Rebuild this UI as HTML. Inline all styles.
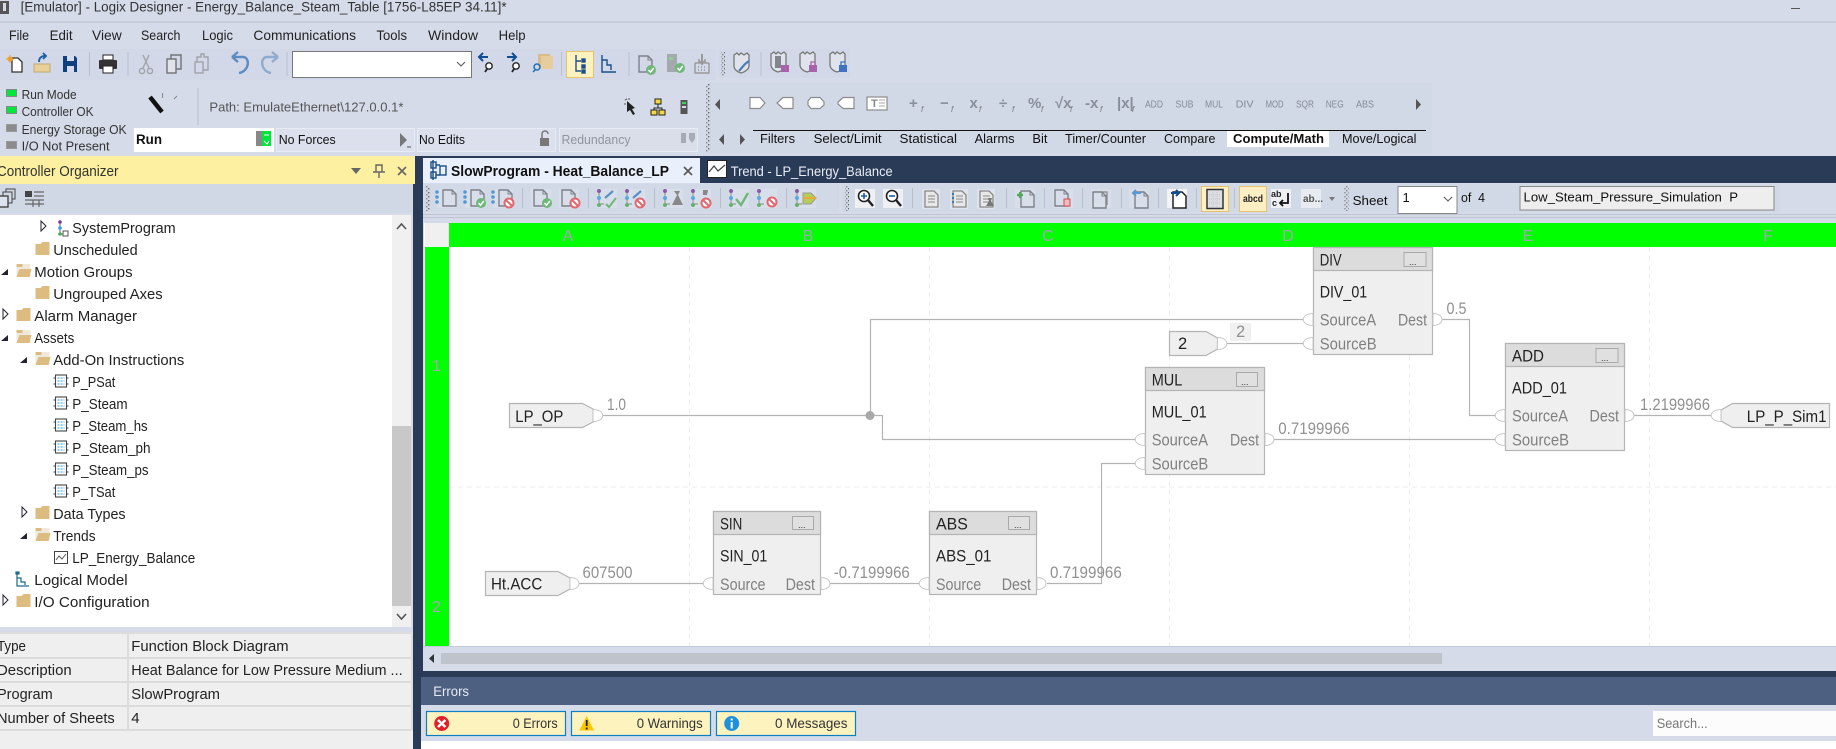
<!DOCTYPE html>
<html lang="en"><head><meta charset="utf-8"><title>Logix Designer</title>
<style>
html,body{margin:0;padding:0;background:#d5dbe9;overflow:hidden}
svg{display:block}
text{font-family:"Liberation Sans",sans-serif;white-space:pre}
.m{font-size:14px;fill:#222}
.t{font-size:15px;fill:#222}
.s{font-size:12.5px;fill:#333}
.i{font-size:13px;fill:#111}
.h{font-size:16px;fill:#ab9fba;text-anchor:middle}
.n{font-size:16.5px;fill:#222}
.p{font-size:16.5px;fill:#808080}
.v{font-size:16.5px;fill:#909090}
.o{font-size:10.5px;fill:#858b96}
.f{font-size:15px;fill:#8a8f9a;font-weight:bold}
.w{fill:none;stroke:#b4b4b4;stroke-width:1.2}
.b{stroke:#b4b4b4;stroke-width:1.2}
.pin{fill:#fff;stroke:#c8c8c8;stroke-width:1}
.g{stroke:#eeeeee;stroke-width:1;stroke-dasharray:5 4}
.sep{stroke:#b9bfcc;stroke-width:1}
</style></head>
<body>
<svg xmlns="http://www.w3.org/2000/svg" width="1836" height="749" viewBox="0 0 1836 749">
<defs>
<g id="doc"><path d="M-6-8H3L7-4V8H-6Z" fill="none" stroke="#7d818a" stroke-width="1.4"/><path d="M3-8V-4H7" fill="none" stroke="#7d818a"/></g>
<g id="docb"><path d="M-6-8H3L7-4V8H-6Z" fill="#fff" stroke="#222" stroke-width="1.5"/></g>
<g id="lines"><rect x="-9" y="-10" width="18" height="20" fill="#dfe3ec"/><path d="M-6-8H3L7-4V8H-6Z" fill="#e8e8e8" stroke="#888" stroke-width="1.3"/><path d="M-3-3H4M-3 0H4M-3 3H4" stroke="#888"/></g>
<g id="nodes"><path d="M-5-6V6H0" fill="none" stroke="#888"/><circle cx="-5" cy="-7" r="2" fill="#8a5aa3"/><circle cx="-5" cy="0" r="2" fill="#5aa9dc"/><circle cx="-5" cy="7" r="2" fill="#66b06f"/></g>
<g id="bdots"><circle cx="-8" cy="-6" r="1.8" fill="#4f9ad4"/><circle cx="-8" cy="-1" r="1.8" fill="#4f9ad4"/><circle cx="-8" cy="4" r="1.8" fill="#4f9ad4"/></g>
<g id="chk"><circle r="5" fill="#6fb878"/><path d="M-2.5 0L-.5 2.2L2.8-2" fill="none" stroke="#fff" stroke-width="1.5"/></g>
<g id="no"><circle r="4.5" fill="#fff" stroke="#e2666d" stroke-width="2"/><path d="M-3-3L3 3" stroke="#e2666d" stroke-width="2"/></g>
<g id="sh"><path d="M-8-8L-5-10L-3-8L-1-10L2-8L5-10L7-8V3C7 6 3 9-1 10C-5 9-8 6-8 3Z" fill="#dfe3ec" stroke="#777" stroke-width="1.3"/></g>
<g id="mag"><circle cx="1" cy="3" r="3.2" fill="#fff" stroke="#222" stroke-width="1.4"/><path d="M-1 6L-3 9" stroke="#222" stroke-width="1.8"/></g>
<pattern id="grip" width="4" height="4" patternUnits="userSpaceOnUse"><rect width="1.4" height="1.4" fill="#666"/><rect x="2" y="2" width="1.4" height="1.4" fill="#888"/></pattern>
<g id="folderc"><path d="M-7-5H-2L0-7H7V6H-7Z" fill="#dcbc80"/></g>
<g id="foldero"><path d="M-7-7H7V6H-7Z" fill="#efe9dc"/><path d="M-7 6L-4-2H8L6 6Z" fill="#dcbc80"/><path d="M-7-7H-1V-4H-7Z" fill="#dcbc80"/></g>
<g id="aoi"><rect x="-5" y="-6" width="11" height="12" fill="#fff" stroke="#444" stroke-width="1.1"/><path d="M-7-3H-5M-7 3H-5M6-3H8M6 3H8" stroke="#444"/><path d="M-3-3H4M-3 0H4M-3 3H4" stroke="#2d9be0" stroke-dasharray="2 1"/></g>
<g id="expand"><path d="M-2-5L3 0L-2 5Z" fill="#fff" stroke="#223" stroke-width="1"/></g>
<g id="coll"><path d="M3-3V3H-4Z" fill="#223"/></g>
</defs>

<rect width="1836" height="749" fill="#d5dbe9"/>

<!-- title -->
<rect x="0" y="1" width="9" height="13" fill="#555"/><rect x="3" y="3" width="3" height="8" fill="#d5dbe9"/>
<text x="20.6" y="11.5" font-size="13.5" fill="#333" textLength="486" lengthAdjust="spacingAndGlyphs">[Emulator] - Logix Designer - Energy_Balance_Steam_Table [1756-L85EP 34.11]*</text>
<line x1="0" y1="22" x2="1836" y2="22" stroke="#b9bfcc"/>
<path d="M1791 8.5H1800" stroke="#555"/>

<!-- menu -->
<text class="m" x="9" y="40" textLength="20" lengthAdjust="spacingAndGlyphs">File</text>
<text class="m" x="49.6" y="40" textLength="23" lengthAdjust="spacingAndGlyphs">Edit</text>
<text class="m" x="92" y="40" textLength="29.7" lengthAdjust="spacingAndGlyphs">View</text>
<text class="m" x="141" y="40" textLength="39.4" lengthAdjust="spacingAndGlyphs">Search</text>
<text class="m" x="202" y="40" textLength="31" lengthAdjust="spacingAndGlyphs">Logic</text>
<text class="m" x="253.4" y="40" textLength="102.6" lengthAdjust="spacingAndGlyphs">Communications</text>
<text class="m" x="376.5" y="40" textLength="30.5" lengthAdjust="spacingAndGlyphs">Tools</text>
<text class="m" x="428" y="40" textLength="50" lengthAdjust="spacingAndGlyphs">Window</text>
<text class="m" x="498.6" y="40" textLength="27" lengthAdjust="spacingAndGlyphs">Help</text>

<!-- main toolbar -->
<rect x="0" y="49" width="716" height="31" fill="#d2d8e7"/>
<rect x="718" y="49" width="132" height="29" fill="#d2d8e7"/>
<g transform="translate(16,65)"><path d="M-4-7H2L6-3V7H-4Z" fill="#fff" stroke="#333" stroke-width="1.3"/><circle cx="-6" cy="-6" r="2.6" fill="#f0a030"/><path d="M-10-6H-2M-6-10V-2" stroke="#f0a030"/></g>
<g transform="translate(42,64)"><path d="M-8 0H8V8H-8Z" fill="#e8d09a" stroke="#c4a970"/><path d="M-3-2C-3-7 0-8 3-8M1-11L4-8L1-5" fill="none" stroke="#1a5fa8" stroke-width="1.8"/></g>
<g transform="translate(70,64)"><path d="M-7-8H5L7-6V8H-7Z" fill="#0e3f7e"/><rect x="-3" y="-8" width="7" height="5" fill="#d5dbe9"/><rect x="-3" y="2" width="7" height="6" fill="#d5dbe9"/></g>
<line class="sep" x1="89.5" y1="52" x2="89.5" y2="76"/>
<g transform="translate(108,64)"><rect x="-5" y="-9" width="10" height="5" fill="#fff" stroke="#222"/><rect x="-9" y="-4" width="18" height="9" rx="1" fill="#333"/><rect x="-5" y="2" width="10" height="7" fill="#fff" stroke="#222"/></g>
<line class="sep" x1="128" y1="52" x2="128" y2="76"/>
<g transform="translate(146,64)" fill="none" stroke="#a0a3aa" stroke-width="1.4"><path d="M-3-9L3 4M3-9L-3 4"/><circle cx="-4" cy="7" r="2.6"/><circle cx="4" cy="7" r="2.6"/></g>
<g transform="translate(174,64)" fill="none" stroke="#707278" stroke-width="1.4"><rect x="-7" y="-5" width="9" height="14" fill="#e0e3ea"/><path d="M-3-5V-9H7V5H2"/></g>
<g transform="translate(202,64)" fill="none" stroke="#a0a3aa" stroke-width="1.4"><rect x="-7" y="-2" width="8" height="11"/><path d="M-5-2V-7H-1V-10H2V-7H6V6H1"/></g>
<path d="M233 58H243C250 58 250 72 239 74M232 58L238 53M232 58L238 63" fill="none" stroke="#5f8cc0" stroke-width="2.4" transform="translate(0,-1)"/>
<path d="M277 58H267C260 58 260 72 271 74M278 58L272 53M278 58L272 63" fill="none" stroke="#8fabcd" stroke-width="2.4" transform="translate(0,-1)"/>
<line class="sep" x1="287" y1="52" x2="287" y2="76"/>
<rect x="292.5" y="51.5" width="179" height="26" fill="#fff" stroke="#777"/>
<path d="M457 62L461 66L465 62" fill="none" stroke="#555"/>
<g transform="translate(485,62)"><path d="M3-5H-5M-2-9L-6-5L-2-1" fill="none" stroke="#0e4d96" stroke-width="2"/><use href="#mag" x="3" y="1"/></g>
<g transform="translate(513,62)"><path d="M-6-5H2M-1-9L3-5L-1-1" fill="none" stroke="#0e4d96" stroke-width="2"/><use href="#mag" x="2" y="1"/></g>
<g transform="translate(542,63)"><rect x="-4" y="-9" width="12" height="13" fill="#d8bc8a"/><rect x="-1" y="-7" width="12" height="13" fill="#e5cd9e"/><circle cx="-5" cy="4" r="3" fill="none" stroke="#1a6fb8" stroke-width="1.5"/><path d="M-7 7L-9 9" stroke="#1a6fb8" stroke-width="1.5"/></g>
<line class="sep" x1="561.5" y1="52" x2="561.5" y2="76"/>
<rect x="566.5" y="51.5" width="27" height="26" fill="#fdf2bf" stroke="#e6c26a"/>
<g transform="translate(580,64)" fill="none" stroke="#1b4f8a" stroke-width="1.4"><path d="M-4-9V7H1M-4-3H1"/><rect x="2" y="-5" width="3" height="3" fill="#1b4f8a"/><rect x="2" y="1" width="3" height="3" fill="#1b4f8a"/><rect x="2" y="6" width="3" height="3" fill="#1b4f8a"/></g>
<g transform="translate(608,64)" fill="none" stroke="#1b4f8a" stroke-width="1.4"><path d="M-6-9V8H8M-6-4H-1V1H3V6"/></g>
<line class="sep" x1="629" y1="52" x2="629" y2="76"/>
<g transform="translate(645,64)"><use href="#doc"/><use href="#chk" x="6" y="6"/></g>
<g transform="translate(675,64)"><rect x="-8" y="-10" width="10" height="18" fill="#a4a9b0"/><rect x="-6" y="-7" width="4" height="3" fill="#8fd08f"/><use href="#chk" x="5" y="4"/></g>
<g transform="translate(702,64)" fill="none" stroke="#999" stroke-width="1.4"><path d="M-7-1H-3V-5M7-1H3V-5M-7-1V9H7V-1"/><path d="M0-10V0M-3-3L0 0L3-3" stroke-width="2"/><path d="M-4 3H4M-4 6H4" stroke-dasharray="1 2"/></g>
<rect x="721" y="52" width="4" height="24" fill="url(#grip)"/>
<use href="#sh" x="742" y="63"/><path d="M739 71L745 64L749 61" stroke="#4a7db8" stroke-width="2.2" fill="none"/>
<line class="sep" x1="761" y1="52" x2="761" y2="76"/>
<use href="#sh" x="779" y="62"/><rect x="775" y="56" width="6" height="12" fill="#82858c"/><rect x="781" y="65" width="8" height="7" fill="#a763ac"/>
<use href="#sh" x="808" y="62"/><rect x="809" y="65" width="8" height="7" fill="#a763ac"/><path d="M811 65V62H815V65" fill="none" stroke="#a763ac" stroke-width="1.3"/>
<use href="#sh" x="838" y="62"/><rect x="839" y="65" width="8" height="7" fill="#3f72c4"/><path d="M841 65V62H845" fill="none" stroke="#3f72c4" stroke-width="1.3"/>

<!-- status -->
<rect x="0" y="83" width="702" height="70" fill="#d5dbe9"/>
<rect x="6.5" y="89.5" width="10" height="7" fill="#00e63c" stroke="#888"/>
<rect x="6.5" y="106.5" width="10" height="7" fill="#00e63c" stroke="#888"/>
<rect x="6.5" y="124.5" width="10" height="7" fill="#8c8c8c" stroke="#999"/>
<rect x="6.5" y="141.5" width="10" height="7" fill="#8c8c8c" stroke="#999"/>
<text class="s" x="21.6" y="99" textLength="55" lengthAdjust="spacingAndGlyphs">Run Mode</text>
<text class="s" x="21.6" y="116" textLength="72" lengthAdjust="spacingAndGlyphs">Controller OK</text>
<text class="s" x="21.6" y="134" textLength="105" lengthAdjust="spacingAndGlyphs">Energy Storage OK</text>
<text class="s" x="21.6" y="150.5" textLength="88" lengthAdjust="spacingAndGlyphs">I/O Not Present</text>
<path d="M150 97L162 112" stroke="#111" stroke-width="4.5"/><path d="M162.5 93V98" stroke="#888"/><path d="M177 96L174 99" stroke="#888"/>
<line x1="198" y1="88" x2="198" y2="125" stroke="#b9bfcc"/>
<text x="209.4" y="111.7" font-size="13" fill="#555" textLength="194" lengthAdjust="spacingAndGlyphs">Path: EmulateEthernet\127.0.0.1*</text>
<path d="M627 101L635 108L632 109L635 114L633 115L630 110L627 112Z" fill="#222"/><path d="M625 100L627 99M624 104H626M629 98V100" stroke="#555"/>
<g transform="translate(658,107)" fill="#f5d93a" stroke="#222"><rect x="-3" y="-8" width="6" height="5"/><rect x="-7" y="3" width="6" height="5"/><rect x="1" y="3" width="6" height="5"/><path d="M0-3V1M-4 3V1H4V3" fill="none"/></g>
<g transform="translate(684,107)"><rect x="-3.5" y="-7" width="7" height="14" fill="#555"/><rect x="-2" y="-5" width="4" height="2" fill="#3fd060"/><rect x="-2" y="-1" width="4" height="2" fill="#d5dbe9"/></g>

<rect x="134" y="128" width="140" height="24" fill="#fff"/>
<text x="136" y="144" font-size="13.5" font-weight="bold" fill="#111" textLength="26" lengthAdjust="spacingAndGlyphs">Run</text>
<rect x="256" y="131" width="6" height="15" fill="#888"/><rect x="262" y="131" width="9" height="15" fill="#00e63c"/><path d="M264 135H269M264 141L267 144L269 141" stroke="#fff" fill="none"/>
<rect x="276.5" y="128.5" width="138" height="23" fill="#dbe0ec" stroke="#e7ebf3"/>
<text class="i" x="278.7" y="144" textLength="57" lengthAdjust="spacingAndGlyphs">No Forces</text>
<path d="M400 133L407 140L400 147Z" fill="#777"/><path d="M407 147H411" stroke="#555"/>
<rect x="417.5" y="128.5" width="138" height="23" fill="#dbe0ec" stroke="#e7ebf3"/>
<text class="i" x="419" y="144" textLength="46" lengthAdjust="spacingAndGlyphs">No Edits</text>
<path d="M542 138V134C542 130 548 130 548 134" fill="none" stroke="#777" stroke-width="1.5"/><rect x="540" y="138" width="9" height="8" fill="#777"/>
<rect x="559.5" y="128.5" width="138" height="23" fill="#d9dee9" stroke="#e7ebf3"/>
<text x="561.5" y="144" font-size="13" fill="#8f949e" textLength="69" lengthAdjust="spacingAndGlyphs">Redundancy</text>
<path d="M681 133H686V143H681ZM689 133H695V139L692 143L689 139Z" fill="#a6abb5"/>

<!-- instruction palette -->
<rect x="708" y="83" width="724" height="70" fill="#d1d8e6"/>
<rect x="706" y="84" width="4" height="68" fill="url(#grip)"/>
<path d="M720 99L715 104.5L720 110Z" fill="#555"/>
<g fill="#fff" stroke="#8d8d8d" stroke-width="1.2">
<path d="M750 97.5H760L765 103L760 108.5H750Z"/>
<path d="M793 97.5H783L777 103L783 108.5H793Z"/>
<path d="M811 97.5H820L824 102V105L820 108.5H811L808 105V101Z"/>
<path d="M843 97.5H854V108.5H843L838 104V102Z"/>
<rect x="867" y="97" width="20" height="13"/>
</g>
<text x="871" y="107" font-size="11" font-weight="bold" fill="#888">T</text>
<path d="M879 100H885M879 103H885M879 106H885" stroke="#aaa"/>
<text class="f" x="909" y="108">+</text><text class="f" x="940" y="108">−</text><text class="f" x="969.5" y="108">x</text><text class="f" x="999" y="108">÷</text><text class="f" x="1028" y="108">%</text><text class="f" x="1055" y="108">√x</text><text class="f" x="1085" y="108">-x</text><text class="f" x="1117" y="108">|x|</text>
<g font-size="8" font-style="italic" fill="#777"><text x="921" y="112">f</text><text x="951" y="112">f</text><text x="979" y="112">f</text><text x="1012" y="112">f</text><text x="1041" y="112">f</text><text x="1070" y="112">f</text><text x="1100" y="112">f</text><text x="1132" y="112">f</text></g>
<g>
<text class="o" x="1145" y="107.5" textLength="18" lengthAdjust="spacingAndGlyphs">ADD</text>
<text class="o" x="1175.5" y="107.5" textLength="18" lengthAdjust="spacingAndGlyphs">SUB</text>
<text class="o" x="1205" y="107.5" textLength="18" lengthAdjust="spacingAndGlyphs">MUL</text>
<text class="o" x="1235.6" y="107.5" textLength="18" lengthAdjust="spacingAndGlyphs">DIV</text>
<text class="o" x="1265.6" y="107.5" textLength="18" lengthAdjust="spacingAndGlyphs">MOD</text>
<text class="o" x="1296" y="107.5" textLength="18" lengthAdjust="spacingAndGlyphs">SQR</text>
<text class="o" x="1325.7" y="107.5" textLength="18" lengthAdjust="spacingAndGlyphs">NEG</text>
<text class="o" x="1356" y="107.5" textLength="18" lengthAdjust="spacingAndGlyphs">ABS</text>
</g>
<path d="M1416 99L1421 104.5L1416 110Z" fill="#555"/>
<line x1="753" y1="130.5" x2="1426" y2="130.5" stroke="#111" stroke-width="1"/>
<path d="M724 134L719 139.5L724 145Z" fill="#555"/><path d="M740 134L745 139.5L740 145Z" fill="#555"/>
<rect x="1227" y="131" width="102" height="16" fill="#fff"/>
<text class="i" x="760" y="143" textLength="35" lengthAdjust="spacingAndGlyphs">Filters</text>
<text class="i" x="813.6" y="143" textLength="68" lengthAdjust="spacingAndGlyphs">Select/Limit</text>
<text class="i" x="899.5" y="143" textLength="57.5" lengthAdjust="spacingAndGlyphs">Statistical</text>
<text class="i" x="974.6" y="143" textLength="40" lengthAdjust="spacingAndGlyphs">Alarms</text>
<text class="i" x="1032.4" y="143" textLength="15" lengthAdjust="spacingAndGlyphs">Bit</text>
<text class="i" x="1065" y="143" textLength="81" lengthAdjust="spacingAndGlyphs">Timer/Counter</text>
<text class="i" x="1164" y="143" textLength="51.5" lengthAdjust="spacingAndGlyphs">Compare</text>
<text class="i" x="1233" y="143" font-weight="bold" textLength="91" lengthAdjust="spacingAndGlyphs">Compute/Math</text>
<text class="i" x="1342" y="143" textLength="74.5" lengthAdjust="spacingAndGlyphs">Move/Logical</text>

<!-- dark frame -->
<rect x="415" y="156" width="1421" height="27" fill="#2a3b58"/>
<rect x="415" y="156" width="8" height="521" fill="#2a3b58"/>
<rect x="413" y="677" width="8" height="72" fill="#2a3b58"/>
<rect x="413" y="156" width="2" height="593" fill="#2a3b58"/>

<!-- organizer header -->
<rect x="0" y="156" width="415" height="28" fill="#fdf0a0"/>
<text x="-3" y="176" font-size="14.5" fill="#333" textLength="121.5" lengthAdjust="spacingAndGlyphs">Controller Organizer</text>
<path d="M351 168H361L356 174Z" fill="#666"/>
<path d="M376 165H382V172H376ZM379 172V178M373 172H385" fill="none" stroke="#666" stroke-width="1.4"/>
<path d="M398 167L406 175M406 167L398 175" stroke="#666" stroke-width="1.6"/>
<rect x="0" y="184" width="413" height="29" fill="#d0d7e5"/>
<g fill="none" stroke="#444"><rect x="-2" y="196" width="10" height="11" fill="#dce2ee" stroke-width="1.4"/><path d="M3 196V192H12V203H8M6 192V189H15V199H12" stroke-width="1"/></g>
<rect x="25" y="191" width="7" height="6" fill="#444"/><path d="M34 192H44M34 196H44M25 200H44M25 204H44M33 200V207M39 200V207" stroke="#666" stroke-width="1.2"/>

<!-- tree -->
<rect x="0" y="215" width="392" height="412" fill="#fff"/>
<rect x="392" y="215" width="19" height="412" fill="#f0f0f0"/>
<rect x="392" y="426" width="19" height="180" fill="#c8c8c8"/>
<path d="M397 229L401.5 224L406 229" fill="none" stroke="#555" stroke-width="1.6"/>
<path d="M397 614L401.5 619L406 614" fill="none" stroke="#555" stroke-width="1.6"/>

<use href="#expand" x="43" y="226"/>
<g transform="translate(60,228)"><path d="M0-6V6H4" fill="none" stroke="#666"/><circle cx="0" cy="-6" r="1.8" fill="#7a3c97"/><circle cx="0" cy="0" r="1.8" fill="#3b9bd8"/><circle cx="0" cy="6" r="1.8" fill="#4fa85a"/><rect x="3" y="3" width="5" height="5" fill="#fff" stroke="#555"/></g>
<text class="t" x="72.3" y="233" textLength="103.4" lengthAdjust="spacingAndGlyphs">SystemProgram</text>
<use href="#folderc" x="42.5" y="249"/>
<text class="t" x="53.3" y="255" textLength="84.3" lengthAdjust="spacingAndGlyphs">Unscheduled</text>
<use href="#coll" x="5" y="272"/><use href="#foldero" x="23.5" y="271"/>
<text class="t" x="34.3" y="277" textLength="98.3" lengthAdjust="spacingAndGlyphs">Motion Groups</text>
<use href="#folderc" x="42.5" y="293"/>
<text class="t" x="53.3" y="299" textLength="109.3" lengthAdjust="spacingAndGlyphs">Ungrouped Axes</text>
<use href="#expand" x="5" y="314"/><use href="#folderc" x="23.5" y="315"/>
<text class="t" x="34.3" y="321" textLength="102.7" lengthAdjust="spacingAndGlyphs">Alarm Manager</text>
<use href="#coll" x="5" y="338"/><use href="#foldero" x="23.5" y="337"/>
<text class="t" x="34.3" y="343" textLength="40" lengthAdjust="spacingAndGlyphs">Assets</text>
<use href="#coll" x="24" y="360"/><use href="#foldero" x="42.5" y="359"/>
<text class="t" x="53.3" y="365" textLength="131" lengthAdjust="spacingAndGlyphs">Add-On Instructions</text>
<use href="#aoi" x="60.5" y="381"/>
<text class="t" x="72.3" y="387" textLength="43" lengthAdjust="spacingAndGlyphs">P_PSat</text>
<use href="#aoi" x="60.5" y="403"/>
<text class="t" x="72.3" y="409" textLength="55.3" lengthAdjust="spacingAndGlyphs">P_Steam</text>
<use href="#aoi" x="60.5" y="425"/>
<text class="t" x="72.3" y="431" textLength="75.3" lengthAdjust="spacingAndGlyphs">P_Steam_hs</text>
<use href="#aoi" x="60.5" y="447"/>
<text class="t" x="72.3" y="453" textLength="78.3" lengthAdjust="spacingAndGlyphs">P_Steam_ph</text>
<use href="#aoi" x="60.5" y="469"/>
<text class="t" x="72.3" y="475" textLength="76.3" lengthAdjust="spacingAndGlyphs">P_Steam_ps</text>
<use href="#aoi" x="60.5" y="491"/>
<text class="t" x="72.3" y="497" textLength="43" lengthAdjust="spacingAndGlyphs">P_TSat</text>
<use href="#expand" x="24" y="512"/><use href="#folderc" x="42.5" y="513"/>
<text class="t" x="53.3" y="519" textLength="72.3" lengthAdjust="spacingAndGlyphs">Data Types</text>
<use href="#coll" x="24" y="536"/><use href="#foldero" x="42.5" y="535"/>
<text class="t" x="53.3" y="541" textLength="42.3" lengthAdjust="spacingAndGlyphs">Trends</text>
<rect x="54.5" y="551.5" width="13" height="12" fill="#fff" stroke="#444"/><path d="M56 560L59 556L62 559L66 554" fill="none" stroke="#555"/>
<text class="t" x="72.3" y="563" textLength="123" lengthAdjust="spacingAndGlyphs">LP_Energy_Balance</text>
<g transform="translate(22,580)" fill="none" stroke="#1d6b8a" stroke-width="1.2"><path d="M-5-6V6H7M-5-2H-1V2H3V5"/><rect x="-6" y="-8" width="3" height="2" fill="#1d6b8a"/></g>
<text class="t" x="34.3" y="585" textLength="93.3" lengthAdjust="spacingAndGlyphs">Logical Model</text>
<use href="#expand" x="5" y="600"/><use href="#folderc" x="23.5" y="601"/>
<text class="t" x="34.3" y="607" textLength="115.3" lengthAdjust="spacingAndGlyphs">I/O Configuration</text>

<!-- properties -->
<rect x="0" y="627" width="413" height="6" fill="#d5dbe9"/>
<rect x="0" y="633" width="413" height="116" fill="#efefef"/>
<path d="M0 633H411M0 658H411M0 682H411M0 706H411M0 730H411" stroke="#dcdcdc" stroke-width="2"/>
<path d="M128 633V730M412 633V730" stroke="#dcdcdc" stroke-width="2"/>
<text class="t" x="-3" y="651" textLength="29" lengthAdjust="spacingAndGlyphs">Type</text>
<text class="t" x="-3" y="675" textLength="74.7" lengthAdjust="spacingAndGlyphs">Description</text>
<text class="t" x="-3" y="699" textLength="55.7" lengthAdjust="spacingAndGlyphs">Program</text>
<text class="t" x="-3" y="723" textLength="117.7" lengthAdjust="spacingAndGlyphs">Number of Sheets</text>
<text class="t" x="131.3" y="651" textLength="157.3" lengthAdjust="spacingAndGlyphs">Function Block Diagram</text>
<text class="t" x="131.3" y="675" textLength="271.3" lengthAdjust="spacingAndGlyphs">Heat Balance for Low Pressure Medium ...</text>
<text class="t" x="131.3" y="699" textLength="88.7" lengthAdjust="spacingAndGlyphs">SlowProgram</text>
<text class="t" x="131.3" y="723">4</text>

<!-- tabs -->
<rect x="423" y="158" width="277" height="25" fill="#e9effb"/>
<g fill="none" stroke="#1b4f8a" stroke-width="1.4"><rect x="431" y="162" width="5" height="6"/><rect x="431" y="172" width="5" height="6"/><rect x="440" y="166" width="6" height="9"/><path d="M433 160V180M436 165H440M436 175H440"/></g>
<text x="451" y="176" font-size="14.5" font-weight="bold" fill="#111" textLength="218" lengthAdjust="spacingAndGlyphs">SlowProgram - Heat_Balance_LP</text>
<path d="M684 167L692 175M692 167L684 175" stroke="#555" stroke-width="1.6"/>
<rect x="707.5" y="160.5" width="19" height="17" fill="#fff" stroke="#222"/><path d="M709 172L714 166L718 171L725 165" fill="none" stroke="#444" stroke-width="1.2"/>
<text x="730.7" y="176" font-size="14" fill="#e9edf5" textLength="162" lengthAdjust="spacingAndGlyphs">Trend - LP_Energy_Balance</text>

<!-- editor toolbar -->
<rect x="423" y="183" width="1413" height="40" fill="#d5dbe9"/>
<rect x="424" y="184" width="415" height="28" fill="#d1d8e6"/>
<rect x="842" y="184" width="938" height="28" fill="#d1d8e6"/>
<rect x="426" y="186" width="4" height="25" fill="url(#grip)"/>
<rect x="845" y="186" width="4" height="25" fill="url(#grip)"/>
<rect x="1344.5" y="186" width="4" height="25" fill="url(#grip)"/>
<path d="M423 214.5H1836M423 217.5H1836" stroke="#c0c5d1"/>
<g stroke="#b9bfcc"><path d="M522.5 188V208M588.5 188V208M654.5 188V208M720.5 188V208M786.5 188V208M912.5 188V208M1006.5 188V208M1044.5 188V208M1082.5 188V208M1121.5 188V208M1158.5 188V208M1196.5 188V208M1234.5 188V208"/></g>
<g>
<rect x="437" y="189" width="20" height="19" fill="#d9dfea"/><use href="#doc" x="449" y="198"/><use href="#bdots" x="445" y="198"/>
<rect x="465" y="189" width="20" height="19" fill="#d9dfea"/><use href="#doc" x="477" y="198"/><use href="#bdots" x="473" y="198"/><use href="#chk" x="481" y="203"/>
<rect x="493" y="189" width="20" height="19" fill="#d9dfea"/><use href="#doc" x="505" y="198"/><use href="#bdots" x="501" y="198"/><use href="#no" x="509" y="203"/>
<rect x="531" y="189" width="20" height="19" fill="#d9dfea"/><use href="#doc" x="540" y="198"/><use href="#chk" x="547" y="203"/>
<rect x="559" y="189" width="20" height="19" fill="#d9dfea"/><use href="#doc" x="568" y="198"/><use href="#no" x="575" y="203"/>
<rect x="597" y="189" width="20" height="19" fill="#d9dfea"/><use href="#nodes" x="604" y="198"/><path d="M605 198L613 191" stroke="#5a92c8" stroke-width="2.2"/><path d="M606 204L609 207L616 198" fill="none" stroke="#6fb878" stroke-width="2"/>
<rect x="625" y="189" width="20" height="19" fill="#d9dfea"/><use href="#nodes" x="632" y="198"/><path d="M633 198L641 191" stroke="#5a92c8" stroke-width="2.2"/><use href="#no" x="640" y="203"/>
<rect x="663" y="189" width="20" height="19" fill="#d9dfea"/><use href="#nodes" x="670" y="198"/><path d="M674 191H680L678 195L683 205H672L677 195Z" fill="#888"/>
<rect x="691" y="189" width="20" height="19" fill="#d9dfea"/><use href="#nodes" x="698" y="198"/><path d="M703 190H708L707 195H703Z" fill="#888"/><use href="#no" x="706" y="203"/>
<rect x="729" y="189" width="20" height="19" fill="#d9dfea"/><use href="#nodes" x="736" y="198"/><path d="M736 199L741 205L748 193" fill="none" stroke="#6fb878" stroke-width="2.4"/>
<rect x="757" y="189" width="20" height="19" fill="#d9dfea"/><use href="#nodes" x="764" y="198"/><use href="#no" x="772" y="202"/>
<rect x="796" y="189" width="20" height="19" fill="#d9dfea"/><use href="#nodes" x="802" y="198"/><path d="M803 193H811L816 198L811 204H803Z" fill="#b5cc55" stroke="#999"/><path d="M803 198H816" stroke="#e8a83c" stroke-width="2"/>

<rect x="855" y="189" width="20" height="19" fill="#eef0f4"/><circle cx="864" cy="196" r="5.5" fill="#fff" stroke="#222" stroke-width="1.6"/><path d="M861 196H867M864 193V199" stroke="#1b5fa8" stroke-width="1.6"/><path d="M868 200L873 206" stroke="#222" stroke-width="2.4"/>
<rect x="883" y="189" width="20" height="19" fill="#eef0f4"/><circle cx="892" cy="196" r="5.5" fill="#fff" stroke="#222" stroke-width="1.6"/><path d="M889 196H895" stroke="#1b5fa8" stroke-width="1.6"/><path d="M896 200L901 206" stroke="#222" stroke-width="2.4"/>
<use href="#lines" x="931" y="199"/>
<use href="#lines" x="959" y="199"/><path d="M953 193V205" stroke="#2d7fc8" stroke-width="2" stroke-dasharray="2 2"/>
<use href="#lines" x="986" y="199"/><path d="M988 198H992L991 201L994 206H986L989 201Z" fill="#777"/>
<rect x="1015" y="189" width="20" height="19" fill="#d9dfea"/><use href="#doc" x="1027" y="199"/><path d="M1020 192V198M1017 195H1023" stroke="#4ea85a" stroke-width="2.2"/>
<rect x="1053" y="189" width="20" height="19" fill="#d9dfea"/><use href="#doc" x="1061" y="198"/><rect x="1064" y="199" width="6" height="7" fill="#ecc0b8" stroke="#d45"/>
<rect x="1091" y="189" width="20" height="19" fill="#d9dfea"/><use href="#doc" x="1099" y="200"/><path d="M1098 192H1107V205" fill="none" stroke="#888" stroke-width="1.3"/>
<rect x="1129" y="189" width="20" height="19" fill="#d9dfea"/><use href="#doc" x="1141" y="200"/><path d="M1141 193H1133M1136 190L1133 193L1136 196" fill="none" stroke="#5a98d4" stroke-width="2"/>
<rect x="1167" y="189" width="20" height="19" fill="#f3f4f8"/><use href="#docb" x="1179" y="200"/><path d="M1171 193H1179M1176 190L1179 193L1176 196" fill="none" stroke="#0e4d96" stroke-width="2"/>
<rect x="1201.5" y="186.5" width="27" height="25" fill="#fdeec4" stroke="#e6c26a"/><rect x="1207" y="189.5" width="16" height="19" fill="#dcdee4" stroke="#333" stroke-width="1.5"/><path d="M1209 195H1221M1209 199H1221M1209 203H1221M1213 192V207M1217 192V207" stroke="#c4c6cc" stroke-dasharray="1 1"/>
<rect x="1239.5" y="186.5" width="27" height="25" fill="#fdeec4" stroke="#e6c26a"/>
<text x="1243" y="202" font-family="Liberation Mono" font-size="10" font-weight="bold" fill="#222" textLength="20" lengthAdjust="spacingAndGlyphs">abcd</text>
<rect x="1271" y="189" width="20" height="19" fill="#eef0f4"/><text x="1271" y="197" font-size="9" font-weight="bold" fill="#222">ab</text><text x="1272" y="206" font-size="9" font-weight="bold" fill="#222">c</text><path d="M1288 193V203H1280M1283 200L1280 203L1283 206" fill="none" stroke="#111" stroke-width="1.8"/>
<rect x="1301" y="189" width="20" height="19" fill="#e8ebf1"/><text x="1303" y="202" font-size="10" font-weight="bold" fill="#555">ab...</text>
<path d="M1329 197H1335L1332 201Z" fill="#777"/>
</g>
<text class="i" x="1352.6" y="205" fill="#333" textLength="35" lengthAdjust="spacingAndGlyphs">Sheet</text>
<rect x="1398" y="186.5" width="59" height="27" fill="#fff" stroke="#888"/>
<text class="i" x="1402.5" y="202">1</text>
<path d="M1444 197L1448 201L1452 197" fill="none" stroke="#555"/>
<text class="i" x="1461" y="202" fill="#444" textLength="24" lengthAdjust="spacingAndGlyphs">of  4</text>
<rect x="1520" y="186.5" width="254" height="23.5" fill="#eee" stroke="#888"/>
<text class="i" x="1523.5" y="201.7" textLength="214.5" lengthAdjust="spacingAndGlyphs">Low_Steam_Pressure_Simulation  P</text>

<!-- editor -->
<rect x="423" y="219" width="1413" height="431" fill="#d5dbe9"/>
<rect x="424" y="223" width="1412" height="424" fill="#fff"/>
<rect x="425" y="223" width="24" height="24" fill="#f0f0f0"/>
<rect x="449" y="223" width="1387" height="24" fill="#00ff00"/>
<rect x="425" y="247" width="24" height="399" fill="#00ff00"/>
<text class="h" x="568" y="241">A</text><text class="h" x="808" y="241">B</text><text class="h" x="1048" y="241">C</text><text class="h" x="1288" y="241">D</text><text class="h" x="1528" y="241">E</text><text class="h" x="1768" y="241">F</text>
<text class="h" x="436.5" y="371">1</text><text class="h" x="436.5" y="612">2</text>
<path class="g" d="M689.5 247V646M929.5 247V646M1169.5 247V646M1409.5 247V646M1649.5 247V646M449 487H1836"/>

<!-- wires -->
<path class="w" d="M603 415.5H882.5V439.5H1135"/>
<path class="w" d="M870.5 415.5V319.5H1303"/>
<circle cx="870" cy="415.5" r="4.5" fill="#a8a8a8"/>
<path class="w" d="M1226 343.5H1303"/>
<path class="w" d="M1274 439.5H1496"/>
<path class="w" d="M1442 319.5H1469.5V415.5H1496"/>
<path class="w" d="M1634 415.5H1711"/>
<path class="w" d="M578 583.5H703.5"/>
<path class="w" d="M830 583.5H919"/>
<path class="w" d="M1047 583.5H1101.5V463.5H1135"/>

<!-- tags -->
<g fill="#efefef" class="b"><path d="M509.5 403.5H582.5L593 409V422L582.5 427.5H509.5Z"/><path d="M1169.5 331.5H1206L1217.5 338V349L1206 355.5H1169.5Z"/><path d="M485.5 571.5H558L570 578V589L558 595.5H485.5Z"/><path d="M1829.5 403.5H1732.5L1721 410V421L1732.5 427.5H1829.5Z"/></g>
<path class="pin" d="M593 409.5C606 409.5 606 421.5 593 421.5Z"/>
<path class="pin" d="M1217.5 337.5C1230 337.5 1230 349.5 1217.5 349.5Z"/>
<path class="pin" d="M570 577.5C582 577.5 582 589.5 570 589.5Z"/>
<path class="pin" d="M1721 409.5C1708 409.5 1708 421.5 1721 421.5Z"/>
<rect x="1230" y="323" width="21" height="18" fill="#f0f0f0"/>
<text class="v" x="1236" y="337">2</text>
<text class="n" x="515.3" y="422" textLength="48" lengthAdjust="spacingAndGlyphs">LP_OP</text>
<text class="n" x="1178" y="349">2</text>
<text class="n" x="491" y="589.5" textLength="51.3" lengthAdjust="spacingAndGlyphs">Ht.ACC</text>
<text class="n" x="1746.8" y="422" textLength="79.7" lengthAdjust="spacingAndGlyphs">LP_P_Sim1</text>

<!-- blocks: DIV -->
<g>
<rect x="1313.5" y="247.5" width="119" height="107" fill="#efefef" class="b"/><rect x="1313.5" y="247.5" width="119" height="23" fill="#dcdcdc" class="b"/>
<rect x="1404" y="252.5" width="22" height="14" fill="#e0e0e0" stroke="#aaa"/><text x="1409" y="265" font-size="9" fill="#333">...</text>
<text class="n" x="1319.7" y="265.5" textLength="22" lengthAdjust="spacingAndGlyphs">DIV</text>
<text class="n" x="1319.7" y="297.5" textLength="47.5" lengthAdjust="spacingAndGlyphs">DIV_01</text>
<text class="p" x="1319.7" y="325.5" textLength="56.5" lengthAdjust="spacingAndGlyphs">SourceA</text>
<text class="p" x="1319.7" y="349.5" textLength="57" lengthAdjust="spacingAndGlyphs">SourceB</text>
<text class="p" x="1398" y="325.5" textLength="29" lengthAdjust="spacingAndGlyphs">Dest</text>
<path class="pin" d="M1313 313.5C1300 313.5 1300 325.5 1313 325.5Z"/><path class="pin" d="M1313 337.5C1300 337.5 1300 349.5 1313 349.5Z"/><path class="pin" d="M1433 313.5C1445 313.5 1445 325.5 1433 325.5Z"/>
</g>
<!-- ADD -->
<g>
<rect x="1505.5" y="343.5" width="119" height="107" fill="#efefef" class="b"/><rect x="1505.5" y="343.5" width="119" height="23" fill="#dcdcdc" class="b"/>
<rect x="1596" y="348.5" width="22" height="14" fill="#e0e0e0" stroke="#aaa"/><text x="1601" y="361" font-size="9" fill="#333">...</text>
<text class="n" x="1512" y="361.5" textLength="32" lengthAdjust="spacingAndGlyphs">ADD</text>
<text class="n" x="1512" y="393.5" textLength="55" lengthAdjust="spacingAndGlyphs">ADD_01</text>
<text class="p" x="1512" y="421.5" textLength="56" lengthAdjust="spacingAndGlyphs">SourceA</text>
<text class="p" x="1512" y="445.5" textLength="57" lengthAdjust="spacingAndGlyphs">SourceB</text>
<text class="p" x="1589.5" y="421.5" textLength="29.5" lengthAdjust="spacingAndGlyphs">Dest</text>
<path class="pin" d="M1505 409.5C1492 409.5 1492 421.5 1505 421.5Z"/><path class="pin" d="M1505 433.5C1492 433.5 1492 445.5 1505 445.5Z"/><path class="pin" d="M1625 409.5C1637 409.5 1637 421.5 1625 421.5Z"/>
</g>
<!-- MUL -->
<g>
<rect x="1145.5" y="367.5" width="119" height="107" fill="#efefef" class="b"/><rect x="1145.5" y="367.5" width="119" height="23" fill="#dcdcdc" class="b"/>
<rect x="1236.5" y="372.5" width="21" height="14" fill="#e0e0e0" stroke="#aaa"/><text x="1241" y="385" font-size="9" fill="#333">...</text>
<text class="n" x="1151.7" y="385.5" textLength="30.6" lengthAdjust="spacingAndGlyphs">MUL</text>
<text class="n" x="1151.7" y="417.5" textLength="55" lengthAdjust="spacingAndGlyphs">MUL_01</text>
<text class="p" x="1151.7" y="445.5" textLength="56.3" lengthAdjust="spacingAndGlyphs">SourceA</text>
<text class="p" x="1151.7" y="469.5" textLength="56.6" lengthAdjust="spacingAndGlyphs">SourceB</text>
<text class="p" x="1230" y="445.5" textLength="29" lengthAdjust="spacingAndGlyphs">Dest</text>
<path class="pin" d="M1145 433.5C1132 433.5 1132 445.5 1145 445.5Z"/><path class="pin" d="M1145 457.5C1132 457.5 1132 469.5 1145 469.5Z"/><path class="pin" d="M1265 433.5C1277 433.5 1277 445.5 1265 445.5Z"/>
</g>
<!-- SIN -->
<g>
<rect x="713.5" y="511.5" width="107" height="83" fill="#efefef" class="b"/><rect x="713.5" y="511.5" width="107" height="23" fill="#dcdcdc" class="b"/>
<rect x="792.5" y="516.5" width="21" height="13" fill="#e0e0e0" stroke="#aaa"/><text x="798" y="528" font-size="9" fill="#333">...</text>
<text class="n" x="720" y="529.5" textLength="22.3" lengthAdjust="spacingAndGlyphs">SIN</text>
<text class="n" x="720" y="561.5" textLength="47.3" lengthAdjust="spacingAndGlyphs">SIN_01</text>
<text class="p" x="720" y="590" textLength="45.5" lengthAdjust="spacingAndGlyphs">Source</text>
<text class="p" x="785.6" y="590" textLength="29.4" lengthAdjust="spacingAndGlyphs">Dest</text>
<path class="pin" d="M713 577.5C700 577.5 700 589.5 713 589.5Z"/><path class="pin" d="M821 577.5C833 577.5 833 589.5 821 589.5Z"/>
</g>
<!-- ABS -->
<g>
<rect x="929.5" y="511.5" width="107" height="83" fill="#efefef" class="b"/><rect x="929.5" y="511.5" width="107" height="23" fill="#dcdcdc" class="b"/>
<rect x="1008.5" y="516.5" width="21" height="13" fill="#e0e0e0" stroke="#aaa"/><text x="1014" y="528" font-size="9" fill="#333">...</text>
<text class="n" x="936" y="529.5" textLength="31.8" lengthAdjust="spacingAndGlyphs">ABS</text>
<text class="n" x="936" y="561.5" textLength="55.4" lengthAdjust="spacingAndGlyphs">ABS_01</text>
<text class="p" x="936" y="590" textLength="45.2" lengthAdjust="spacingAndGlyphs">Source</text>
<text class="p" x="1001.7" y="590" textLength="29.3" lengthAdjust="spacingAndGlyphs">Dest</text>
<path class="pin" d="M929 577.5C916 577.5 916 589.5 929 589.5Z"/><path class="pin" d="M1037 577.5C1049 577.5 1049 589.5 1037 589.5Z"/>
</g>
<!-- values -->
<text class="v" x="607" y="410" textLength="19" lengthAdjust="spacingAndGlyphs">1.0</text>
<text class="v" x="1446.5" y="314" textLength="20" lengthAdjust="spacingAndGlyphs">0.5</text>
<text class="v" x="1640" y="410" textLength="70" lengthAdjust="spacingAndGlyphs">1.2199966</text>
<text class="v" x="1278.3" y="434" textLength="71.3" lengthAdjust="spacingAndGlyphs">0.7199966</text>
<text class="v" x="582.5" y="578" textLength="50" lengthAdjust="spacingAndGlyphs">607500</text>
<text class="v" x="833.8" y="578" textLength="76" lengthAdjust="spacingAndGlyphs">-0.7199966</text>
<text class="v" x="1050" y="578" textLength="71.8" lengthAdjust="spacingAndGlyphs">0.7199966</text>

<!-- bottom of editor -->
<rect x="423" y="646" width="1413" height="1" fill="#c4cada"/>
<rect x="423" y="647" width="1413" height="24" fill="#d5dbe9"/>
<rect x="441" y="653" width="1001" height="11" fill="#bec3cc"/>
<path d="M434 654L429 658.5L434 663Z" fill="#333"/>
<rect x="421" y="671" width="1415" height="6" fill="#2a3b58"/>
<rect x="421" y="677" width="1415" height="28" fill="#4d6082"/>
<text x="433.3" y="696" font-size="14" fill="#e6eaf2" textLength="35.7" lengthAdjust="spacingAndGlyphs">Errors</text>
<rect x="421" y="705" width="1415" height="36" fill="#d5dbe9"/>
<rect x="421" y="741" width="1415" height="8" fill="#fff"/>
<g fill="#fdf3bf" stroke="#0b7fc4" stroke-width="1.2"><rect x="426.5" y="711.5" width="139" height="24"/><rect x="571.5" y="711.5" width="139" height="24"/><rect x="716.5" y="711.5" width="139" height="24"/></g>
<circle cx="441.7" cy="723.5" r="7.5" fill="#e0202a"/><path d="M438 720L445.4 727M445.4 720L438 727" stroke="#fff" stroke-width="2.4"/>
<path d="M586.7 716L594 730.5H579.4Z" fill="#fdc600"/><path d="M586.7 720V726M586.7 727.5V729.5" stroke="#222" stroke-width="1.8"/>
<circle cx="731.7" cy="723.5" r="7.5" fill="#1e90dc"/><path d="M731.7 722V728.5M731.7 718.5V720.5" stroke="#fff" stroke-width="2"/>
<text x="512.7" y="728" font-size="14" fill="#333" textLength="45" lengthAdjust="spacingAndGlyphs">0 Errors</text>
<text x="636.7" y="728" font-size="14" fill="#333" textLength="66" lengthAdjust="spacingAndGlyphs">0 Warnings</text>
<text x="775" y="728" font-size="14" fill="#333" textLength="72.5" lengthAdjust="spacingAndGlyphs">0 Messages</text>
<rect x="1653" y="711" width="183" height="25" fill="#fcfcfc"/>
<text x="1656.7" y="728" font-size="14" fill="#777" textLength="51" lengthAdjust="spacingAndGlyphs">Search...</text>
</svg>
</body></html>
